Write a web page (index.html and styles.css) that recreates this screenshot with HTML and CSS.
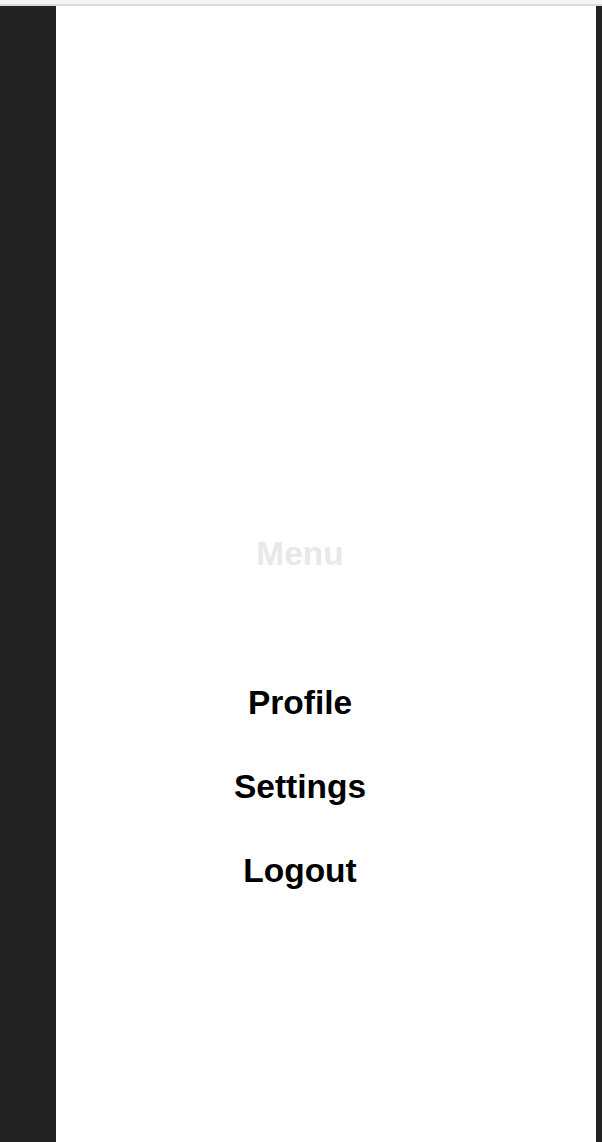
FILE: index.html
```html
<!DOCTYPE html>
<html>
<head>
<meta charset="utf-8">
<link rel="stylesheet" href="styles.css">
</head>
<body>
<div class="topbar"></div>
<div class="frame">
  <div class="side"></div>
  <div class="main">
    <div class="menu-title">Menu</div>
    <nav class="items">
      <div class="item">Profile</div>
      <div class="item">Settings</div>
      <div class="item">Logout</div>
    </nav>
  </div>
  <div class="edge"></div>
</div>
</body>
</html>
```
FILE: styles.css
```css
html, body {
  margin: 0;
  padding: 0;
  height: 100%;
  background: #ffffff;
  font-family: "Liberation Sans", Arial, sans-serif;
}
body {
  display: flex;
  flex-direction: column;
  overflow: hidden;
}
.topbar {
  height: 4px;
  background: #f4f4f4;
  border-bottom: 2px solid #dcdcdc;
  flex: none;
}
.frame {
  flex: 1;
  display: flex;
}
.side {
  width: 56px;
  background: #222222;
  flex: none;
}
.edge {
  width: 6px;
  background: #222222;
  flex: none;
}
.main {
  flex: 1;
  background: #ffffff;
  display: flex;
  flex-direction: column;
  align-items: center;
  padding: 529px 52px 0 0;
}
.menu-title {
  font-size: 33.5px;
  line-height: 38px;
  font-weight: bold;
  color: #e8e8e8;
  margin-bottom: 111px;
}
.items {
  display: flex;
  flex-direction: column;
  align-items: center;
  gap: 46px;
}
.item {
  font-size: 33.5px;
  line-height: 38px;
  font-weight: bold;
  color: #000000;
}
```
